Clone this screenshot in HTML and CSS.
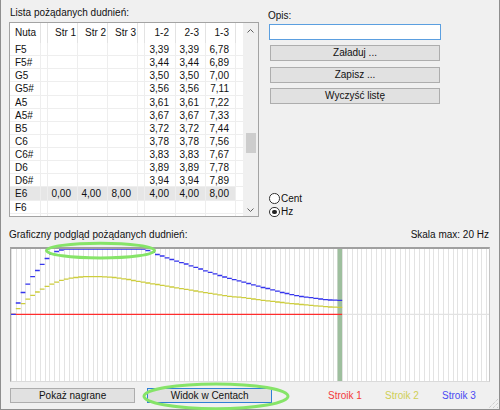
FILE: index.html
```html
<!DOCTYPE html>
<html lang="pl">
<head>
<meta charset="utf-8">
<title>Dudnienia</title>
<link rel="stylesheet" href="styles.css">
</head>
<body>
<div class="win">
  <div class="top">
    <div class="left">
      <div class="lbl lbl-list">Lista pożądanych dudnień:</div>
      <div class="listbox">
        <div class="lv">
          <div class="row head">
            <div class="c n">Nuta</div><div class="c"></div><div class="c s">Str 1</div><div class="c s">Str 2</div><div class="c s">Str 3</div><div class="c"></div><div class="c">1-2</div><div class="c">2-3</div><div class="c">1-3</div><div class="c"></div>
          </div>
          <div class="row"><div class="c n">F5</div><div class="c"></div><div class="c"></div><div class="c"></div><div class="c"></div><div class="c"></div><div class="c">3,39</div><div class="c">3,39</div><div class="c">6,78</div><div class="c"></div></div>
          <div class="row"><div class="c n">F5#</div><div class="c"></div><div class="c"></div><div class="c"></div><div class="c"></div><div class="c"></div><div class="c">3,44</div><div class="c">3,44</div><div class="c">6,89</div><div class="c"></div></div>
          <div class="row"><div class="c n">G5</div><div class="c"></div><div class="c"></div><div class="c"></div><div class="c"></div><div class="c"></div><div class="c">3,50</div><div class="c">3,50</div><div class="c">7,00</div><div class="c"></div></div>
          <div class="row"><div class="c n">G5#</div><div class="c"></div><div class="c"></div><div class="c"></div><div class="c"></div><div class="c"></div><div class="c">3,56</div><div class="c">3,56</div><div class="c">7,11</div><div class="c"></div></div>
          <div class="row"><div class="c n">A5</div><div class="c"></div><div class="c"></div><div class="c"></div><div class="c"></div><div class="c"></div><div class="c">3,61</div><div class="c">3,61</div><div class="c">7,22</div><div class="c"></div></div>
          <div class="row"><div class="c n">A5#</div><div class="c"></div><div class="c"></div><div class="c"></div><div class="c"></div><div class="c"></div><div class="c">3,67</div><div class="c">3,67</div><div class="c">7,33</div><div class="c"></div></div>
          <div class="row"><div class="c n">B5</div><div class="c"></div><div class="c"></div><div class="c"></div><div class="c"></div><div class="c"></div><div class="c">3,72</div><div class="c">3,72</div><div class="c">7,44</div><div class="c"></div></div>
          <div class="row"><div class="c n">C6</div><div class="c"></div><div class="c"></div><div class="c"></div><div class="c"></div><div class="c"></div><div class="c">3,78</div><div class="c">3,78</div><div class="c">7,56</div><div class="c"></div></div>
          <div class="row"><div class="c n">C6#</div><div class="c"></div><div class="c"></div><div class="c"></div><div class="c"></div><div class="c"></div><div class="c">3,83</div><div class="c">3,83</div><div class="c">7,67</div><div class="c"></div></div>
          <div class="row"><div class="c n">D6</div><div class="c"></div><div class="c"></div><div class="c"></div><div class="c"></div><div class="c"></div><div class="c">3,89</div><div class="c">3,89</div><div class="c">7,78</div><div class="c"></div></div>
          <div class="row"><div class="c n">D6#</div><div class="c"></div><div class="c"></div><div class="c"></div><div class="c"></div><div class="c"></div><div class="c">3,94</div><div class="c">3,94</div><div class="c">7,89</div><div class="c"></div></div>
          <div class="row sel"><div class="c n">E6</div><div class="c"></div><div class="c">0,00</div><div class="c">4,00</div><div class="c">8,00</div><div class="c"></div><div class="c">4,00</div><div class="c">4,00</div><div class="c">8,00</div><div class="c"></div></div>
          <div class="row"><div class="c n">F6</div><div class="c"></div><div class="c"></div><div class="c"></div><div class="c"></div><div class="c"></div><div class="c"></div><div class="c"></div><div class="c"></div><div class="c"></div></div>
          <div class="row"><div class="c n">F6#</div><div class="c"></div><div class="c"></div><div class="c"></div><div class="c"></div><div class="c"></div><div class="c"></div><div class="c"></div><div class="c"></div><div class="c"></div></div>
        </div>
        <div class="sbar">
          <div class="sb-btn up"><svg width="7" height="4" viewBox="0 0 7 4"><path d="M0.5 3.5L3.5 0.5L6.5 3.5" fill="none" stroke="#606060"/></svg></div>
          <div class="sb-track"><div class="thumb"></div></div>
          <div class="sb-btn down"><svg width="7" height="4" viewBox="0 0 7 4"><path d="M0.5 0.5L3.5 3.5L6.5 0.5" fill="none" stroke="#606060"/></svg></div>
        </div>
      </div>
    </div>
    <div class="right">
      <div class="lbl lbl-opis">Opis:</div>
      <div class="tb"></div>
      <div class="btn">Załaduj ...</div>
      <div class="btn">Zapisz ...</div>
      <div class="btn">Wyczyść listę</div>
      <div class="radios">
        <div class="radio"><span class="dot"></span><span>Cent</span></div>
        <div class="radio on"><span class="dot"></span><span>Hz</span></div>
      </div>
    </div>
  </div>

  <div class="chead">
    <span>Graficzny podgląd pożądanych dudnień:</span>
    <span>Skala max: 20 Hz</span>
  </div>

  <div class="chart">
    <svg class="plot" width="478" height="132" viewBox="11 249 478 132">
      <rect x="337.6" y="249" width="4.4" height="132" fill="#9ebf9e"/>
      <path d="M342 314.3H489" stroke="#e2e2e2" stroke-width="1.2" fill="none"/>
      <path fill="none" stroke="#cdcd3c" stroke-width="1.3" d="M11 314.3h4.8M15.8 308.7h4.8M20.6 303.7h4.8M25.4 299.2h4.8M30.2 295.4h4.8M35 292h4.8M39.8 289.1h4.8M44.6 286.4h4.8M49.4 284.1h4.8M54.2 282.1h4.8M59 280.4h4.8M63.8 279.1h4.8M68.6 278.2h4.8M73.4 277.5h4.8M78.2 277h4.8M83 276.7H102.2M102.2 276.8h4.8M107 277.1h4.8M111.8 277.5h4.8M116.6 278.1h4.8M121.4 278.8h4.8M126.2 279.5h4.8M131 280.5h4.8M135.8 281.4h4.8M140.6 282.2h4.8M145.4 283h4.8M150.2 283.8h4.8M155 284.5h4.8M159.8 285.3h4.8M164.6 286.1h4.8M169.4 287h4.8M174.2 287.8h4.8M179 288.6h4.8M183.8 289.4h4.8M188.6 290.2h4.8M193.4 291h4.8M198.2 291.8h4.8M203 292.6h4.8M207.8 293.4h4.8M212.6 294.1h4.8M217.4 294.9h4.8M222.2 295.7h4.8M227 296.4h4.8M231.8 296.8h4.8M236.6 297.2h4.8M241.4 297.7h4.8M246.2 298.3h4.8M251 299h4.8M255.8 299.7h4.8M260.6 300.3h4.8M265.4 300.8h4.8M270.2 301.4h4.8M275 302h4.8M279.8 302.5h4.8M284.6 303.1h4.8M289.4 303.6h4.8M294.2 304h4.8M299 304.5h4.8M303.8 304.9h4.8M308.6 305.4h4.8M313.4 305.8h4.8M318.2 306.2h4.8M323 306.6h4.8M327.8 307h4.8M332.6 307.2h4.8M337.4 307.4h4.8"/>
      <path d="M11 314.3H342.2" stroke="#ff2d2d" stroke-width="1.3" fill="none"/>
      <path fill="none" stroke="#3535ee" stroke-width="1.3" d="M11 314.3h4.8M15.8 303h4.8M20.6 292.5h4.8M25.4 284.2h4.8M30.2 276.7h4.8M35 270.5h4.8M39.8 264.3h4.8M44.6 258.5h4.8M49.4 254h4.8M54.2 251.5h4.8M59 250h4.8M63.8 249H145.4M145.4 250.5h4.8M150.2 252.3h4.8M155 254.5h4.8M159.8 256h4.8M164.6 257.8h4.8M169.4 259.5h4.8M174.2 261.2h4.8M179 262.6h4.8M183.8 264h4.8M188.6 265.8h4.8M193.4 267.4h4.8M198.2 269h4.8M203 270.8h4.8M207.8 272.4h4.8M212.6 273.9h4.8M217.4 275.5h4.8M222.2 277h4.8M227 278.4h4.8M231.8 279.6h4.8M236.6 280.8h4.8M241.4 282.1h4.8M246.2 283.5h4.8M251 284.8h4.8M255.8 286.2h4.8M260.6 287.5h4.8M265.4 288.5h4.8M270.2 289.8h4.8M275 291.2h4.8M279.8 292.5h4.8M284.6 293.5h4.8M289.4 294.6h4.8M294.2 295.6h4.8M299 296.5h4.8M303.8 297.1h4.8M308.6 297.7h4.8M313.4 298.4h4.8M318.2 299h4.8M323 299.6h4.8M327.8 300h4.8M332.6 300.2h4.8M337.4 300.4h4.8"/>
    </svg>
  </div>

  <div class="bottom">
    <div class="bbtn">Pokaż nagrane</div>
    <div class="bbtn def">Widok w Centach</div>
    <div class="legend">
      <span class="s1">Stroik 1</span>
      <span class="s2">Stroik 2</span>
      <span class="s3">Stroik 3</span>
    </div>
  </div>

  <svg class="marks" width="500" height="410" viewBox="0 0 500 410">
    <ellipse cx="100.5" cy="250.6" rx="54" ry="7.4" fill="none" stroke="#86e468" stroke-width="3"/>
    <ellipse cx="216" cy="396.3" rx="72" ry="12.4" fill="none" stroke="#86e468" stroke-width="3"/>
  </svg>
  <svg class="grip" width="12" height="12" viewBox="0 0 12 12">
    <path d="M11 2L2 11M11 6L6 11M11 10L10 11" stroke="#bdbdbd" stroke-width="1" stroke-dasharray="1 1" fill="none"/>
  </svg>
</div>
</body>
</html>
```

FILE: styles.css
```css
* { box-sizing: border-box; }
html, body { margin: 0; padding: 0; }
body {
  width: 500px;
  height: 410px;
  overflow: hidden;
  background: #f0f0f0;
  font-family: "Liberation Sans Narrow", "Liberation Sans", Arial, sans-serif;
  font-size: 10px;
  color: #111;
}
.win {
  position: relative;
  width: 500px;
  height: 410px;
  border: 1px solid #8e8e8e;
  border-top: 0;
  padding-left: 8px;
}

/* top area */
.top { display: flex; height: 229px; }
.left { width: 250px; }
.lbl { line-height: 12px; height: 12px; white-space: nowrap; }
.lbl-list { margin: 7px 0 3px 1px; }

.listbox {
  display: flex;
  width: 250px;
  height: 195px;
  border: 1px solid #a3a3a3;
  background: #fff;
}
.lv { width: 233px; overflow: hidden; }
.row {
  display: grid;
  grid-template-columns: 31px 7px 30px 30px 30px 7px 31px 30px 30px 7px;
  height: 13.14px;
  line-height: 13px;
}
.row .c {
  border-right: 1px solid #eeeeee;
  border-bottom: 1px solid #eeeeee;
  text-align: right;
  padding-right: 6px;
  white-space: nowrap;
  overflow: hidden;
}
.row .c:last-child { border-right: 0; padding: 0; }
.row .c.n { text-align: left; padding-left: 5px; padding-right: 0; }
.row.head { height: 20px; line-height: 20px; }
.row.head .c { border-right-color: #e3e3e3; border-bottom: 0; }
.row.head .c.s { text-align: left; padding-left: 7px; }
.row.sel .c { background: #e6e6e6; }
.row.sel .c:last-child { background: transparent; }

.sbar {
  width: 15px;
  background: #f0f0f0;
  display: flex;
  flex-direction: column;
}
.sb-btn { height: 15px; display: flex; justify-content: center; align-items: center; }
.sb-btn svg { display: block; }
.sb-btn.up { padding-top: 1px; }
.sb-btn.down { padding-top: 3px; }
.sb-track { flex: 1; }
.thumb {
  margin: 95px 0 0 3px;
  width: 10px;
  height: 20px;
  background: #cdcdcd;
}

/* right column */
.right { width: 173px; margin-left: 9px; display: flex; flex-direction: column; }
.lbl-opis { margin-top: 9.5px; }
.tb {
  margin: 2.5px 0 0 1px;
  width: 172px;
  height: 16px;
  border: 1px solid #5b9fe0;
  background: #fff;
}
.btn {
  margin: 5px 0 0 2px;
  width: 170px;
  height: 16px;
  border: 1px solid #adadad;
  background: #e1e1e1;
  text-align: center;
  line-height: 14px;
}
.btn + .btn { margin-top: 5.5px; }
.radios { margin: 87.7px 0 0 1px; }
.radio { display: flex; align-items: center; height: 13.5px; line-height: 13.5px; }
.dot {
  width: 10.5px;
  height: 10.5px;
  border: 1px solid #333;
  border-radius: 50%;
  background: #fff;
  margin-right: 1.5px;
  display: flex;
  justify-content: center;
  align-items: center;
}
.radio.on .dot::after {
  content: "";
  width: 4.5px;
  height: 4.5px;
  border-radius: 50%;
  background: #222;
}

/* chart */
.chead {
  display: flex;
  justify-content: space-between;
  width: 481px;
  height: 12px;
  line-height: 12px;
  padding-right: 1px;
  white-space: nowrap;
}
.chart {
  margin: 6px 0 0 1px;
  width: 480px;
  height: 135px;
  border: 1px solid;
  border-top-width: 2px;
  border-color: #a0a0a0 #c6c6c6 #dadada #a8a8a8;
  background-color: #fff;
  background-image: repeating-linear-gradient(90deg, #e3e3e3 0 1px, transparent 1px 4.8px);
}
.plot { display: block; }

/* bottom */
.bottom { display: flex; align-items: center; margin-top: 5.5px; height: 15.5px; }
.bbtn {
  width: 130px;
  height: 15.5px;
  margin-left: 1px;
  border: 1px solid #adadad;
  background: #e1e1e1;
  text-align: center;
  line-height: 13.5px;
}
.bbtn.def { margin-left: 12px; border-color: #2f7fd4; }
.legend { display: flex; margin-left: 55.7px; line-height: 13.5px; }
.legend span { width: 57px; }
.s1 { color: #f23b3b; }
.s2 { color: #cfcf55; }
.s3 { color: #4a4af2; }

/* overlays */
.marks { position: absolute; left: -1px; top: 0; pointer-events: none; }
.grip { position: absolute; right: 0; bottom: 0; }
```
